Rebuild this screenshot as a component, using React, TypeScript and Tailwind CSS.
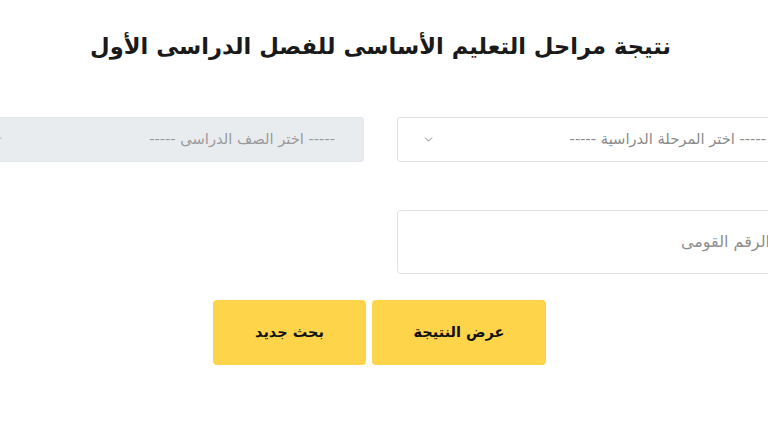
import { ChevronDown } from 'lucide-react';

const font = { fontFamily: '"DejaVu Sans", "Noto Sans", sans-serif' };

export default function App() {
  return (
    <div dir="rtl" className="w-[768px] h-[427px] overflow-hidden bg-white" style={font}>
      <div className="w-[829px] mr-[-27px] ml-[-34px]">
        {/* Title */}
        <h1 className="pt-[30px] h-[117px] text-center text-[22.6px] font-bold text-[#1a1a1a]">
          نتيجة مراحل التعليم الأساسى للفصل الدراسى الأول
        </h1>

        {/* Selects */}
        <div className="grid grid-cols-2 gap-[33px]">
          <div className="h-[45px] flex items-center justify-between pr-[28px] pl-[24px] border border-[#dfe2e6] rounded-[3px] bg-white">
            <span className="text-[14.7px] text-[#8a8a8a]">----- اختر المرحلة الدراسية -----</span>
            <ChevronDown className="w-[13px] h-[13px] text-[#6b6b6b]" strokeWidth={1.5} />
          </div>
          <div className="h-[45px] flex items-center justify-between pr-[28px] pl-[24px] border border-[#e3e6ea] rounded-[3px] bg-[#e9ecef]">
            <span className="text-[14.7px] text-[#9a9a9a]">----- اختر الصف الدراسى -----</span>
            <ChevronDown className="w-[13px] h-[13px] text-[#8a8a8a]" strokeWidth={1.5} />
          </div>
        </div>

        {/* National ID */}
        <div className="grid grid-cols-2 gap-[33px] mt-[48px]">
          <div className="h-[64px] flex items-center pr-[24px] border border-[#dfe2e6] rounded-[4px] bg-white">
            <span className="text-[16px] text-[#8f8f8f]">الرقم القومى</span>
          </div>
        </div>
      </div>

      {/* Buttons */}
      <div className="flex justify-center gap-[6px] mt-[26px] pr-[9px]">
        <button className="w-[174px] h-[65px] rounded-[4px] bg-[#fed54a] text-[14.5px] font-bold text-[#111]">
          عرض النتيجة
        </button>
        <button className="w-[153px] h-[65px] rounded-[4px] bg-[#fed54a] text-[14.5px] font-bold text-[#111]">
          بحث جديد
        </button>
      </div>
    </div>
  );
}
